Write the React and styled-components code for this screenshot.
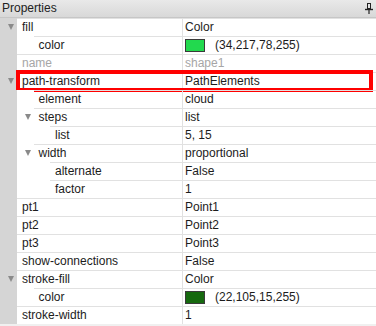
import React from 'react'
import styled, { createGlobalStyle, css } from 'styled-components'

const GlobalStyle = createGlobalStyle`
  html, body {
    margin: 0;
    padding: 0;
    background: #f0f0f0;
  }
  body {
    font-family: "Liberation Sans", Arial, sans-serif;
    font-size: 12px;
    color: #1c1c1c;
  }
`

const GUTTER = 17
const INDENT = 16.5

const Panel = styled.div`
  width: 376px;
  height: 326px;
  overflow: hidden;
  background: #f0f0f0;
`

const TitleBar = styled.div`
  height: 18px;
  box-sizing: border-box;
  display: flex;
  align-items: center;
  justify-content: space-between;
  padding: 0 3px 0 2px;
  background: linear-gradient(to bottom, #e9e9e9, #d8d8d8);
  border-bottom: 1px solid #c6c6c6;
  color: #222;
`

const Title = styled.span`
  font-size: 12px;
  line-height: 17px;
`

const Tree = styled.div`
  display: flex;
  flex-direction: column;
  background: #fff;
`

const Row = styled.div`
  position: relative;
  display: flex;
  height: 18px;
`

const Lead = styled.div`
  flex: none;
  display: flex;
  align-items: center;
  justify-content: flex-end;
  box-sizing: border-box;
  padding-right: 3px;
  background: linear-gradient(to right, #d5d5d5 ${GUTTER}px, #fff ${GUTTER}px);
`

const Arrow = styled.span`
  width: 0;
  height: 0;
  border-left: 3.5px solid transparent;
  border-right: 3.5px solid transparent;
  border-top: 6px solid #8a8a8a;
`

const NameCell = styled.div`
  flex: 1;
  min-width: 0;
  box-sizing: border-box;
  border-top: 1px solid #e1e1e1;
  padding-left: 5px;
  line-height: 17px;
  white-space: nowrap;
  color: ${p => (p.$muted ? '#a6a6a6' : '#1c1c1c')};
`

const ValueCell = styled.div`
  flex: none;
  width: 194px;
  box-sizing: border-box;
  display: flex;
  align-items: center;
  border-top: 1px solid #e1e1e1;
  border-left: 1px solid #e1e1e1;
  padding-left: 2px;
  line-height: 17px;
  white-space: nowrap;
  color: ${p => (p.$muted ? '#a6a6a6' : '#1c1c1c')};
`

const Swatch = styled.span`
  width: 20px;
  height: 13px;
  box-sizing: border-box;
  margin-right: 10px;
  border: 1px solid #3a3a3a;
  background: ${p => p.$color};
`

const Highlight = styled.div`
  position: absolute;
  left: ${GUTTER - 1}px;
  right: 3px;
  top: -2px;
  height: 22px;
  box-sizing: border-box;
  border: 4px solid #ff0000;
  pointer-events: none;
`

const Pin = () => (
  <svg width="8" height="11" viewBox="0 0 8 11">
    <rect x="2.5" y="0.5" width="3" height="5" fill="none" stroke="#222" />
    <line x1="0" y1="6.5" x2="8" y2="6.5" stroke="#222" strokeWidth="1.4" />
    <line x1="4" y1="7" x2="4" y2="11" stroke="#222" strokeWidth="1.2" />
  </svg>
)

const rows = [
  { name: 'fill', depth: 0, open: true, value: 'Color' },
  { name: 'color', depth: 1, swatch: 'rgb(34,217,78)', value: '(34,217,78,255)' },
  { name: 'name', depth: 0, muted: true, value: 'shape1' },
  { name: 'path-transform', depth: 0, open: true, value: 'PathElements', highlighted: true },
  { name: 'element', depth: 1, value: 'cloud' },
  { name: 'steps', depth: 1, open: true, value: 'list' },
  { name: 'list', depth: 2, value: '5, 15' },
  { name: 'width', depth: 1, open: true, value: 'proportional' },
  { name: 'alternate', depth: 2, value: 'False' },
  { name: 'factor', depth: 2, value: '1' },
  { name: 'pt1', depth: 0, value: 'Point1' },
  { name: 'pt2', depth: 0, value: 'Point2' },
  { name: 'pt3', depth: 0, value: 'Point3' },
  { name: 'show-connections', depth: 0, value: 'False' },
  { name: 'stroke-fill', depth: 0, open: true, value: 'Color' },
  { name: 'color', depth: 1, swatch: 'rgb(22,105,15)', value: '(22,105,15,255)' },
  { name: 'stroke-width', depth: 0, value: '1' },
]

const PropertyRow = ({ row }) => (
  <Row>
    <Lead style={{ width: GUTTER + row.depth * INDENT }}>
      {row.open && <Arrow />}
    </Lead>
    <NameCell $muted={row.muted}>{row.name}</NameCell>
    <ValueCell $muted={row.muted}>
      {row.swatch && <Swatch $color={row.swatch} />}
      {row.value}
    </ValueCell>
    {row.highlighted && <Highlight />}
  </Row>
)

export default function App() {
  return (
    <>
      <GlobalStyle />
      <Panel>
        <TitleBar>
          <Title>Properties</Title>
          <Pin />
        </TitleBar>
        <Tree>
          {rows.map((row, i) => (
            <PropertyRow key={i} row={row} />
          ))}
        </Tree>
      </Panel>
    </>
  )
}
